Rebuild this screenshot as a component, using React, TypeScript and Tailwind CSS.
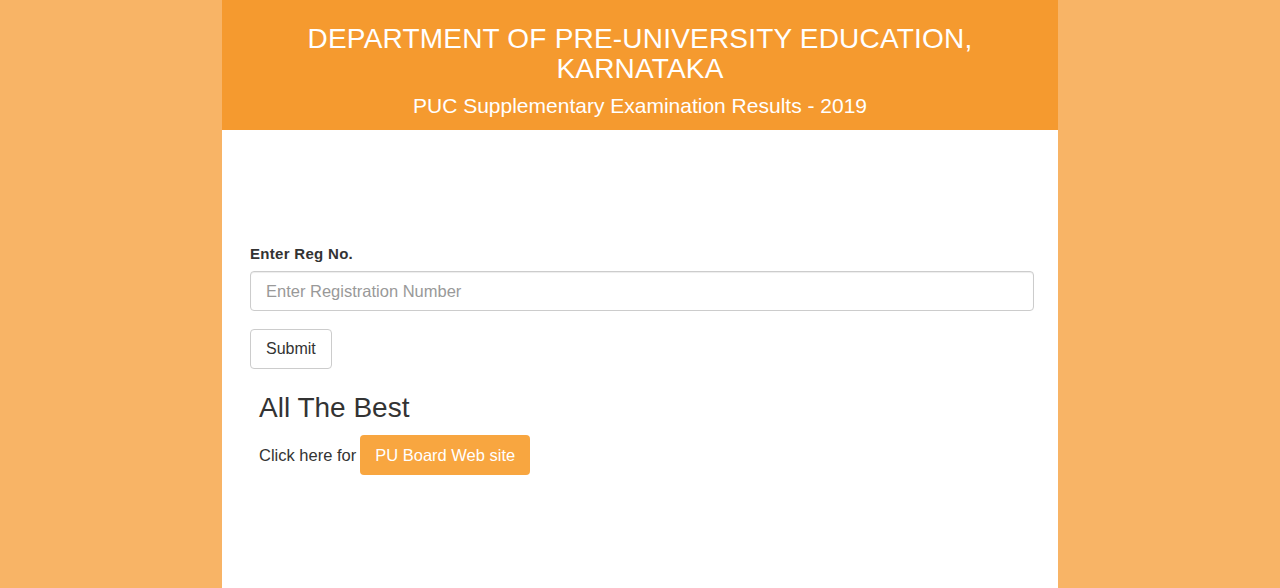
const App = () => {
  return (
    <div
      className="min-h-[588px] h-[588px] overflow-hidden bg-[#f8b466] flex justify-center"
      style={{ fontFamily: '"Liberation Sans", Arial, sans-serif' }}
    >
      <div className="w-[836px] bg-white flex flex-col">
        <header className="bg-[#f59a2f] h-[130px] pt-[24px] text-center text-white">
          <h1 className="text-[28px] leading-[30px] px-10 tracking-[0.2px]">
            DEPARTMENT OF PRE-UNIVERSITY EDUCATION,
            <br />
            KARNATAKA
          </h1>
          <p className="mt-[10px] text-[21px] leading-6">
            PUC Supplementary Examination Results - 2019
          </p>
        </header>

        <main className="pl-[28px] pr-[24px] pt-[115px]">
          <label className="block text-[15px] leading-[18px] font-bold text-[#333] mb-[8px] tracking-[0.3px]">
            Enter Reg No.
          </label>
          <input
            type="text"
            placeholder="Enter Registration Number"
            className="block w-full h-[40px] px-[15px] text-[16.5px] border border-[#ccc] rounded-[4px] placeholder:text-[#999] text-[#555] shadow-[inset_0_1px_1px_rgba(0,0,0,0.075)]"
          />
          <button className="mt-[18px] h-[40px] px-[15px] text-[16px] text-[#333] bg-white border border-[#ccc] rounded-[4px]">
            Submit
          </button>

          <div className="pl-[9px] mt-[24px]">
            <h2 className="text-[28px] leading-[30px] text-[#333]">All The Best</h2>
            <div className="mt-[12px] flex items-center gap-[4px]">
              <span className="text-[16.5px] text-[#333]">Click here for</span>
              <a
                href="#"
                className="h-[40px] px-[15px] flex items-center text-[16.5px] text-white bg-[#f8a640] rounded-[4px]"
              >
                PU Board Web site
              </a>
            </div>
          </div>
        </main>
      </div>
    </div>
  );
};

export default App;
